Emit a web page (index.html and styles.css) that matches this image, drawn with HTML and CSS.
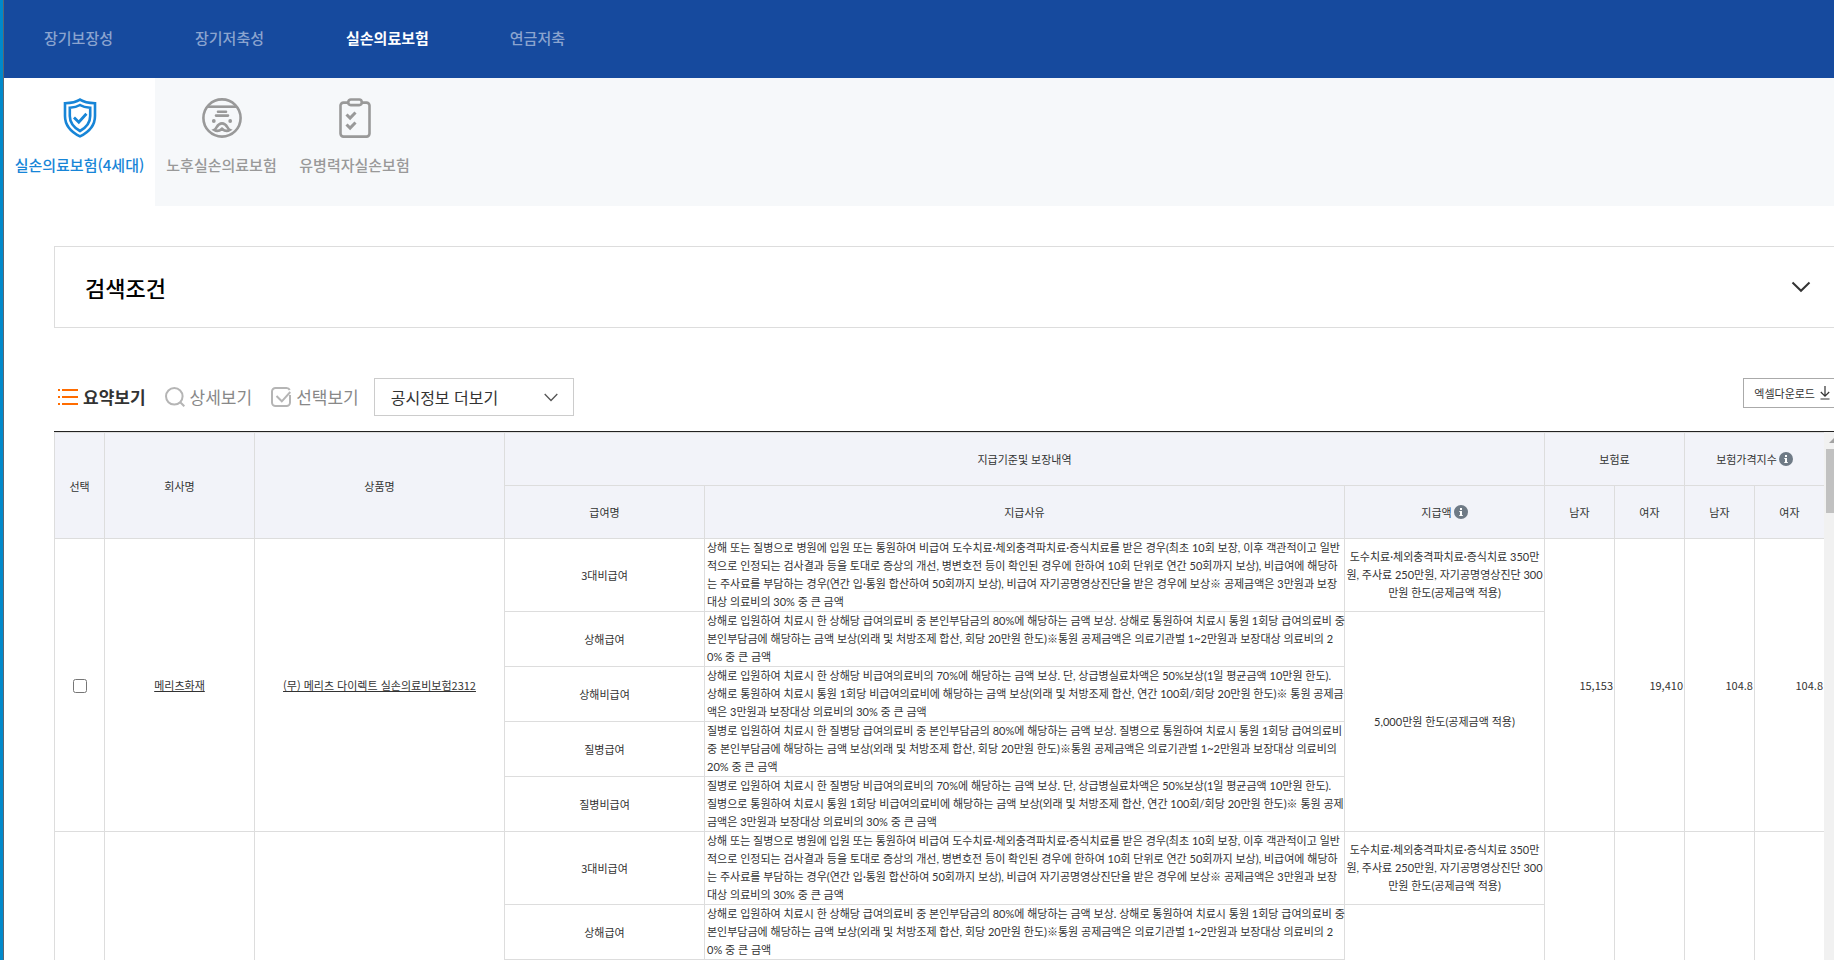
FILE: index.html
```html
<!DOCTYPE html>
<html lang="ko">
<head>
<meta charset="utf-8">
<title>실손의료보험</title>
<link rel="stylesheet" href="styles.css">
</head>
<body>
<div class="app">
  <nav class="gnb">
    <a href="#">장기보장성</a>
    <a href="#">장기저축성</a>
    <a href="#" class="on">실손의료보험</a>
    <a href="#">연금저축</a>
  </nav>
  <nav class="tabs">
    <a href="#" class="tab tab-wide on">
      <svg width="40" height="40" viewBox="0 0 40 40" fill="none" stroke="currentColor" stroke-width="2.6"><path d="M20 1.6C16 4.2 11 5 5 5.2V18c0 9.500 6 16 15 20.400C29 34 35 27.500 35 18V5.200C29 5 24 4.200 20 1.600Z"/><path d="M20 7C17 8.800 14 9.400 9.800 9.700V18c0 7 4 11.500 10.200 15C26.200 29.500 30.200 25 30.200 18V9.700C26 9.400 23 8.800 20 7Z"/><path d="M14 19.500l4.800 4.800 7.600-8.600" stroke-width="2.800"/></svg>
      <span>실손의료보험(4세대)</span>
    </a>
    <a href="#" class="tab">
      <svg width="40" height="40" viewBox="0 0 40 40" fill="none" stroke="currentColor" stroke-width="2.6"><circle cx="20" cy="20" r="18.600"/><path d="M5.500 8.700h29"/><path d="M16 13.700h8M14 17.600h12" stroke-linecap="round"/><circle cx="11.800" cy="23" r="1.900" fill="currentColor" stroke="none"/><circle cx="28.200" cy="23" r="1.900" fill="currentColor" stroke="none"/><path d="M12.200 32c2.500-1 2.800-6.600 7.800-6.600S25.300 31 27.800 32c-2.500 1.600-5.500.8-7.800-1.300-2.300 2.100-5.300 2.900-7.800 1.300Z"/></svg>
      <span>노후실손의료보험</span>
    </a>
    <a href="#" class="tab">
      <svg width="40" height="40" viewBox="0 0 40 40" fill="none" stroke="currentColor" stroke-width="2.6"><path d="M13 4.600H8.500a3 3 0 0 0-3 3v28a3 3 0 0 0 3 3h23a3 3 0 0 0 3-3v-28a3 3 0 0 0-3-3H27"/><rect x="13.300" y="1.500" width="13.400" height="5.600" rx="2.500"/><path d="M11.500 16.500l3.600 3.600 5.400-5.600M11.500 26.500l3.600 3.600 5.400-5.600" stroke-width="3"/></svg>
      <span>유병력자실손보험</span>
    </a>
  </nav>
  <main class="main">
    <button type="button" class="search-box">
      <span>검색조건</span>
      <svg width="20" height="12" viewBox="0 0 20 12" fill="none" stroke="#333" stroke-width="2"><path d="M1.500 1.500L10 9.800l8.500-8.300"/></svg>
    </button>
    <div class="toolbar">
      <button type="button" class="view on">
        <svg width="20" height="20" viewBox="0 0 20 20" stroke="#ff6c00" stroke-width="2"><path d="M0 3h2M0 10h2M0 17h2M4 3h16M4 10h16M4 17h16"/></svg>요약보기</button>
      <button type="button" class="view">
        <svg width="20" height="20" viewBox="0 0 20 20" fill="none" stroke="#b5b5b5" stroke-width="2"><circle cx="9.300" cy="9.300" r="8.300"/><path d="M15 15l4.300 4.300"/></svg>상세보기</button>
      <button type="button" class="view">
        <svg width="20" height="20" viewBox="0 0 20 20" fill="none" stroke="#b5b5b5" stroke-width="2"><path d="M19 8v7.500a3.500 3.500 0 0 1-3.500 3.500h-11A3.500 3.500 0 0 1 1 15.500v-11A3.500 3.500 0 0 1 4.500 1h11c1.500 0 2.700.8 3.200 2"/><path d="M5.500 9l5.300 5.300L19.300 5"/></svg>선택보기</button>
      <select class="more" aria-label="공시정보 더보기"><option>공시정보 더보기</option></select>
      <button type="button" class="excel">엑셀다운로드
        <svg width="10" height="14" viewBox="0 0 10 14" fill="none" stroke="#333" stroke-width="1.200"><path d="M5 0v10M.8 6L5 10.200 9.200 6M.5 13h9"/></svg></button>
    </div>
    <div class="grid-pane">
      <table class="grid">
        <colgroup><col class="c50"><col class="c150"><col class="c250"><col class="c200"><col><col class="c200"><col class="c70"><col class="c70"><col class="c70"><col class="c70"></colgroup>
        <thead>
          <tr><th rowspan="2">선택</th><th rowspan="2">회사명</th><th rowspan="2">상품명</th><th colspan="3">지급기준및 보장내역</th><th colspan="2">보험료</th><th colspan="2"><span class="tip">보험가격지수<svg width="14" height="14" viewBox="0 0 14 14"><circle cx="7" cy="7" r="7" fill="#6f7a86"/><path d="M6 3h2v2H6zM5.300 6H8v4h.8v1H5.300v-1H6V7h-.7z" fill="#fff"/></svg></span></th></tr>
          <tr><th>급여명</th><th>지급사유</th><th><span class="tip">지급액<svg width="14" height="14" viewBox="0 0 14 14"><circle cx="7" cy="7" r="7" fill="#6f7a86"/><path d="M6 3h2v2H6zM5.300 6H8v4h.8v1H5.300v-1H6V7h-.7z" fill="#fff"/></svg></span></th><th>남자</th><th>여자</th><th>남자</th><th>여자</th></tr>
        </thead>
        <tbody>
          <tr>
            <td rowspan="5"><input type="checkbox" class="pick" aria-label="메리츠화재 선택"></td>
            <td rowspan="5"><a href="#">메리츠화재</a></td>
            <td rowspan="5"><a href="#">(무) 메리츠 다이렉트 실손의료비보험2312</a></td>
            <td>3대비급여</td>
            <td class="why">상해 또는 질병으로 병원에 입원 또는 통원하여 비급여 도수치료·체외충격파치료·증식치료를 받은 경우(최초 10회 보장, 이후 객관적이고 일반<br>적으로 인정되는 검사결과 등을 토대로 증상의 개선, 병변호전 등이 확인된 경우에 한하여 10회 단위로 연간 50회까지 보상), 비급여에 해당하<br>는 주사료를 부담하는 경우(연간 입·통원 합산하여 50회까지 보상), 비급여 자기공명영상진단을 받은 경우에 보상※ 공제금액은 3만원과 보장<br>대상 의료비의 30% 중 큰 금액</td>
            <td class="limit">도수치료·체외충격파치료·증식치료 350만<br>원, 주사료 250만원, 자기공명영상진단 300<br>만원 한도(공제금액 적용)</td>
            <td rowspan="5" class="num">15,153</td><td rowspan="5" class="num">19,410</td><td rowspan="5" class="num">104.8</td><td rowspan="5" class="num">104.8</td>
          </tr>
          <tr>
            <td>상해급여</td>
            <td class="why">상해로 입원하여 치료시 한 상해당 급여의료비 중 본인부담금의 80%에 해당하는 금액 보상. 상해로 통원하여 치료시 통원 1회당 급여의료비 중<br>본인부담금에 해당하는 금액 보상(외래 및 처방조제 합산, 회당 20만원 한도)※통원 공제금액은 의료기관벌 1~2만원과 보장대상 의료비의 2<br>0% 중 큰 금액</td>
            <td rowspan="4" class="limit">5,000만원 한도(공제금액 적용)</td>
          </tr>
          <tr>
            <td>상해비급여</td>
            <td class="why">상해로 입원하여 치료시 한 상해당 비급여의료비의 70%에 해당하는 금액 보상. 단, 상급병실료차액은 50%보상(1일 평균금액 10만원 한도).<br>상해로 통원하여 치료시 통원 1회당 비급여의료비에 해당하는 금액 보상(외래 및 처방조제 합산, 연간 100회/회당 20만원 한도)※ 통원 공제금<br>액은 3만원과 보장대상 의료비의 30% 중 큰 금액</td>
          </tr>
          <tr>
            <td>질병급여</td>
            <td class="why">질병로 입원하여 치료시 한 질병당 급여의료비 중 본인부담금의 80%에 해당하는 금액 보상. 질병으로 통원하여 치료시 통원 1회당 급여의료비<br>중 본인부담금에 해당하는 금액 보상(외래 및 처방조제 합산, 회당 20만원 한도)※통원 공제금액은 의료기관벌 1~2만원과 보장대상 의료비의<br>20% 중 큰 금액</td>
          </tr>
          <tr>
            <td>질병비급여</td>
            <td class="why">질병로 입원하여 치료시 한 질병당 비급여의료비의 70%에 해당하는 금액 보상. 단, 상급병실료차액은 50%보상(1일 평균금액 10만원 한도).<br>질병으로 통원하여 치료시 통원 1회당 비급여의료비에 해당하는 금액 보상(외래 및 처방조제 합산, 연간 100회/회당 20만원 한도)※ 통원 공제<br>금액은 3만원과 보장대상 의료비의 30% 중 큰 금액</td>
          </tr>
        </tbody>
        <tbody>
          <tr>
            <td rowspan="2" class="open"></td><td rowspan="2" class="open"></td><td rowspan="2" class="open"></td>
            <td>3대비급여</td>
            <td class="why">상해 또는 질병으로 병원에 입원 또는 통원하여 비급여 도수치료·체외충격파치료·증식치료를 받은 경우(최초 10회 보장, 이후 객관적이고 일반<br>적으로 인정되는 검사결과 등을 토대로 증상의 개선, 병변호전 등이 확인된 경우에 한하여 10회 단위로 연간 50회까지 보상), 비급여에 해당하<br>는 주사료를 부담하는 경우(연간 입·통원 합산하여 50회까지 보상), 비급여 자기공명영상진단을 받은 경우에 보상※ 공제금액은 3만원과 보장<br>대상 의료비의 30% 중 큰 금액</td>
            <td class="limit">도수치료·체외충격파치료·증식치료 350만<br>원, 주사료 250만원, 자기공명영상진단 300<br>만원 한도(공제금액 적용)</td>
            <td rowspan="2" class="open"></td><td rowspan="2" class="open"></td><td rowspan="2" class="open"></td><td rowspan="2" class="open"></td>
          </tr>
          <tr>
            <td>상해급여</td>
            <td class="why">상해로 입원하여 치료시 한 상해당 급여의료비 중 본인부담금의 80%에 해당하는 금액 보상. 상해로 통원하여 치료시 통원 1회당 급여의료비 중<br>본인부담금에 해당하는 금액 보상(외래 및 처방조제 합산, 회당 20만원 한도)※통원 공제금액은 의료기관벌 1~2만원과 보장대상 의료비의 2<br>0% 중 큰 금액</td>
            <td class="open"></td>
          </tr>
        </tbody>
      </table>
      <div class="scroll">
        <svg width="10" height="17" viewBox="0 0 10 17"><path d="M5 11l5-5v5z" fill="#a3a3a3"/></svg>
        <div class="thumb"></div>
      </div>
    </div>
  </main>
</div>
</body>
</html>
```
FILE: styles.css
```css
* { box-sizing: border-box; }

body {
  margin: 0;
  padding-left: 3px;
  background: #0089cb;
  color: #333;
  font-family: "Noto Sans CJK KR", "Noto Sans", sans-serif;
}

a { color: inherit; text-decoration: none; }

button {
  padding: 0;
  border: 0;
  background: none;
  color: inherit;
  font: inherit;
}

svg { flex: none; display: block; }

.app {
  display: flex;
  flex-direction: column;
  height: 100vh;
  overflow: hidden;
  border-left: 1px solid #5c6670;
  background: #fff;
}

.gnb {
  display: flex;
  align-items: center;
  flex: none;
  gap: 81px;
  height: 78px;
  padding: 0 0 3px 40px;
  background: #164a9e;
  color: #8ba4cf;
  font-size: 15px;
  font-weight: 500;
}

.gnb a { min-width: 70px; }
.gnb .on { color: #fff; font-weight: 700; }

.tabs {
  display: flex;
  flex: none;
  height: 128px;
  background: #f6f8fa;
  color: #999;
  font-size: 15px;
  font-weight: 500;
}

.tab {
  display: flex;
  flex-direction: column;
  align-items: center;
  gap: 16px;
  width: 133px;
  padding-top: 20px;
  line-height: 22px;
  white-space: nowrap;
}

.tab-wide { width: 151px; }
.tab.on { background: #fff; color: #1785d7; }

.main {
  display: flex;
  flex: 1;
  flex-direction: column;
  min-height: 0;
  padding: 40px 0 0 50px;
}

.search-box {
  display: flex;
  align-items: center;
  justify-content: space-between;
  flex: none;
  height: 82px;
  padding: 0 23px 0 30px;
  border: 1px solid #ddd;
  border-right: 0;
  color: #000;
  font-size: 22px;
  font-weight: 500;
}

.toolbar {
  display: flex;
  flex: none;
  align-items: flex-start;
  gap: 19px;
  height: 103px;
  padding: 50px 0 0 4px;
}

.view {
  display: flex;
  align-items: center;
  gap: 5px;
  height: 38px;
  color: #888;
  font-size: 17px;
  line-height: 24px;
}

.view.on { color: #333; font-weight: 700; }

.more {
  width: 200px;
  height: 38px;
  margin-left: -4px;
  padding: 0 16px;
  border: 1px solid #ccc;
  border-radius: 0;
  appearance: none;
  background: #fff url("data:image/svg+xml,%3Csvg xmlns='http://www.w3.org/2000/svg' width='14' height='9' fill='none' stroke='%23555' stroke-width='1.3'%3E%3Cpath d='M.7 1L7 7.500 13.300 1'/%3E%3C/svg%3E") no-repeat right 15px center;
  color: #333;
  font: inherit;
  font-size: 16px;
}

.excel {
  display: flex;
  align-items: center;
  gap: 5px;
  height: 30px;
  margin-left: auto;
  padding: 0 4px 0 10px;
  border: 1px solid #aaa;
  border-right: 0;
  font-size: 11px;
}

.grid-pane {
  display: flex;
  flex: 1;
  align-items: flex-start;
  min-height: 0;
  overflow: hidden;
  border-top: 1px solid #222;
}

.grid {
  flex: 1;
  width: 100%;
  table-layout: fixed;
  border-collapse: separate;
  border-spacing: 0;
  border-top: 1px solid #ddd;
  font-size: 11px;
  line-height: 18px;
}

.c50 { width: 50px; }
.c70 { width: 70px; }
.c150 { width: 150px; }
.c200 { width: 200px; }
.c250 { width: 250px; }

.grid th, .grid td {
  padding: 0 1px;
  border-left: 1px solid #ddd;
  border-bottom: 1px solid #ddd;
  text-align: center;
  vertical-align: middle;
  white-space: nowrap;
}

.grid th {
  height: 53px;
  background: #f2f3f9;
  font-weight: 400;
}

.grid td { color: #333; }
.grid td a { text-decoration: underline; }

.grid .why, .grid .limit {
  font-family: Lato, "Noto Sans CJK KR", sans-serif;
}

.grid .why { padding-left: 2px; text-align: left; }
.grid .num { text-align: right; }
.grid .open { border-bottom: 0; }

.tip {
  display: flex;
  align-items: center;
  justify-content: center;
  gap: 2px;
}

.pick {
  display: block;
  width: 14px;
  height: 14px;
  margin: 2px auto 0;
}

.scroll {
  flex: none;
  align-self: stretch;
  width: 10px;
  background: #f1f1f1;
}

.thumb {
  height: 64px;
  margin-left: 2px;
  background: #c1c1c1;
}
```
